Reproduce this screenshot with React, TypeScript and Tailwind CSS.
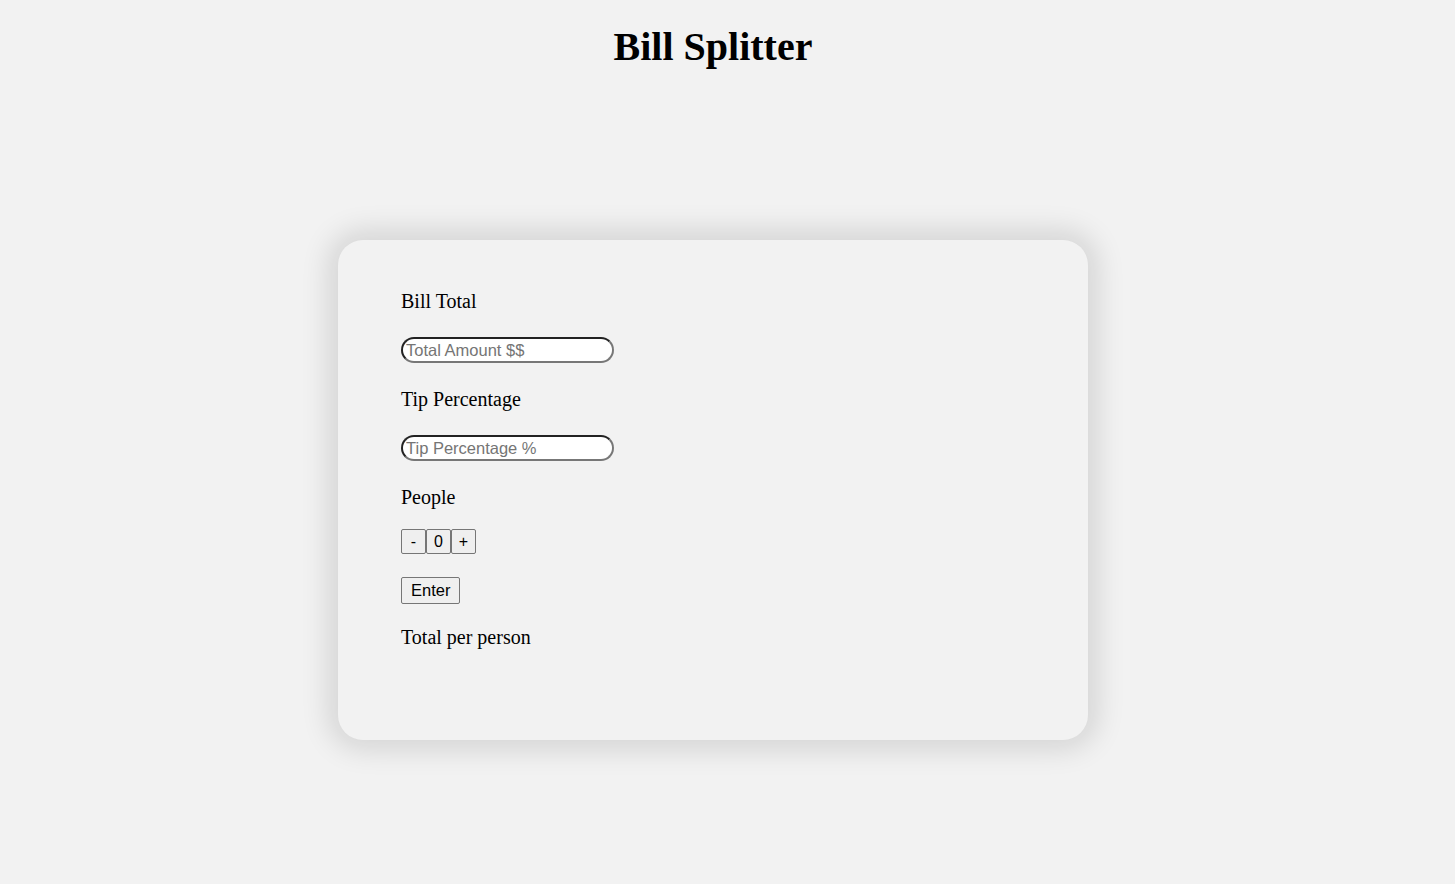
import React from "react";

export default function App() {
  const serif = { fontFamily: '"Liberation Serif", "Times New Roman", serif' };
  const sans = { fontFamily: '"Liberation Sans", Arial, sans-serif' };
  const btn =
    "h-[25px] w-[25px] border border-[#767676] bg-[#efefef] rounded-[2px] text-[16px] text-black flex items-center justify-center leading-none";
  const inputCls =
    "w-[213px] h-[26px] rounded-full border-2 border-[#222] border-b-[#777] border-r-[#777] bg-white px-[3px] text-[16.5px] outline-none placeholder:text-[#757575]";
  return (
    <div className="min-h-screen w-full bg-[#f2f2f2] text-black pr-[29px]" style={serif}>
      <h1 className="text-center text-[40px] font-bold leading-[46px] pt-[24px] m-0">Bill Splitter</h1>
      <div className="flex justify-center mt-[170px]">
        <div className="w-[750px] h-[500px] rounded-[25px] bg-[#f2f2f2] shadow-[0_0_28px_10px_rgba(0,0,0,0.12)] pl-[63px]">
          <div className="flex flex-col pt-[50px]">
            <div className="text-[20px] leading-[23px]">Bill Total</div>
            <input className={`mt-[24px] ${inputCls}`} style={sans} placeholder="Total Amount $$" />
            <div className="mt-[25px] text-[20px] leading-[23px]">Tip Percentage</div>
            <input className={`mt-[24px] ${inputCls}`} style={sans} placeholder="Tip Percentage %" />
            <div className="mt-[25px] text-[20px] leading-[23px]">People</div>
            <div className="mt-[20px] flex" style={sans}>
              <button className={btn}>-</button>
              <div className={btn}>0</div>
              <button className={btn}>+</button>
            </div>
            <div className="mt-[23px]">
              <button
                className="h-[27px] px-[9px] border border-[#767676] bg-[#efefef] rounded-[2px] text-[16.5px] text-black leading-none"
                style={sans}
              >
                Enter
              </button>
            </div>
            <div className="mt-[22px] text-[20px] leading-[23px]">Total per person</div>
          </div>
        </div>
      </div>
    </div>
  );
}
